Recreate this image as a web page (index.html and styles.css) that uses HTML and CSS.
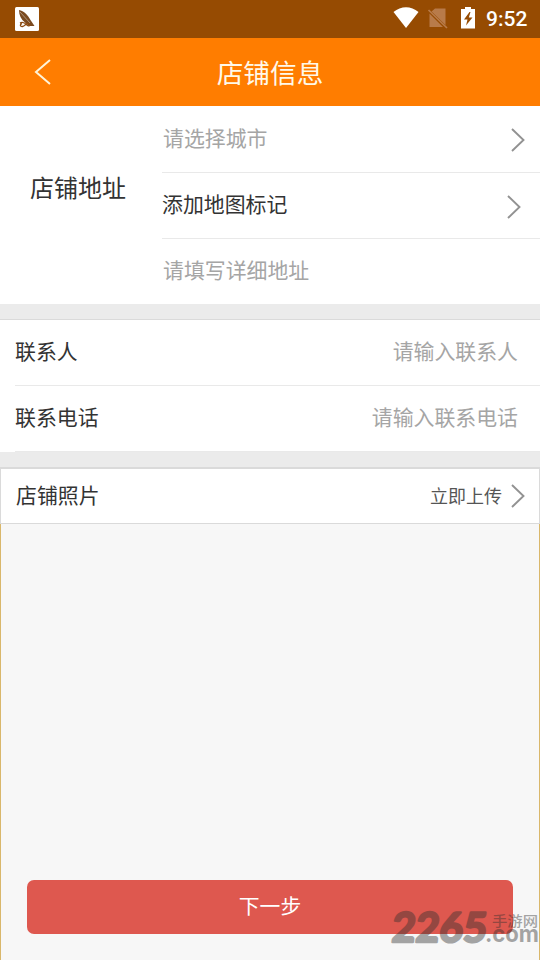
FILE: index.html
```html
<!DOCTYPE html>
<html lang="zh-CN">
<head>
<meta charset="utf-8">
<title>店铺信息</title>
<link rel="stylesheet" href="styles.css">
</head>
<body>
<div class="statusbar">
  <svg class="app-icon" width="24" height="24" viewBox="0 0 24 24"><rect width="24" height="24" rx="1.5" fill="#fff"/><path d="M4 3C9 4 13 8 15.500 13L19.500 19H14L10 15.500C6 12.500 4 8 4 3Z" fill="#7a4a20"/><path d="M5 5L15 16" stroke="#fff" stroke-width=".4"/><path d="M5 16C8 14 10 16 12 18C14 20 16 18 14 16.500C12 15 10 19 7.500 19.500C5 20 4.500 17 7 16.500" fill="none" stroke="#8c4b12" stroke-width="1.300"/></svg>
  <svg class="system-icons" width="84" height="24" viewBox="0 0 84 24"><path d="M.5 5C8-1.500 18-1.500 25.500 5L13 21Z" fill="#fff"/><path d="M42 1.500H52.500V18L38.500 4.500ZM36.500 6.500L50 20H36.500Z" fill="#b87b4a"/><path d="M35.500 3L54 21" stroke="#b87b4a" stroke-width="1.700"/><path d="M72 2V0H78V2H82V21.500H68V2Z" fill="#fff"/><path d="M76.500 5L71 12.500H74.500L73 18.500L79.500 10.500H75.800L77.500 5Z" fill="#964b02"/></svg>
  <span class="clock">9:52</span>
</div>
<header class="header">
  <svg class="back" width="20" height="28" viewBox="0 0 20 28"><path d="M17 2L3 14L17 26" fill="none" stroke="#fff4d8" stroke-width="2"/></svg>
  <h1 class="title">店铺信息</h1>
</header>
<section class="address">
  <div class="address-label">店铺地址</div>
  <div class="address-fields">
    <div class="field hint"><span>请选择城市</span><svg class="chevron" width="14" height="24" viewBox="0 0 14 24"><path d="M1 1L12.500 12L1 23"/></svg></div>
    <div class="field marker"><span>添加地图标记</span><svg class="chevron" width="14" height="24" viewBox="0 0 14 24"><path d="M1 1L12.500 12L1 23"/></svg></div>
    <div class="field hint"><span>请填写详细地址</span></div>
  </div>
</section>
<section class="contact">
  <div class="contact-row"><span>联系人</span><span class="hint">请输入联系人</span></div>
  <div class="contact-row"><span>联系电话</span><span class="hint">请输入联系电话</span></div>
</section>
<section class="photo">
  <span class="photo-label">店铺照片</span>
  <span class="upload">立即上传</span>
  <svg class="chevron" width="14" height="24" viewBox="0 0 14 24"><path d="M1 1L12.500 12L1 23"/></svg>
</section>
<main class="content">
  <button class="next">下一步</button>
</main>
<svg class="watermark" width="154" height="58" viewBox="0 0 154 58">
  <g opacity=".42" fill="#303030">
    <text class="mark-number" transform="translate(5 48) skewX(-5)" textLength="95" lengthAdjust="spacingAndGlyphs">2265</text>
    <text class="mark-cn" x="106" y="32" textLength="46" lengthAdjust="spacingAndGlyphs">手游网</text>
    <text class="mark-com" x="99" y="48" textLength="54" lengthAdjust="spacingAndGlyphs">.com</text>
  </g>
</svg>
</body>
</html>
```
FILE: styles.css
```css
* { box-sizing: border-box; }
body {
  margin: 0;
  width: 540px;
  height: 960px;
  position: relative;
  display: flex;
  flex-direction: column;
  overflow: hidden;
  background: #ebebeb;
  color: #333;
  font: 20.9px/30px "Noto Sans CJK SC", sans-serif;
}
.statusbar {
  height: 38px;
  flex: none;
  display: flex;
  align-items: center;
  padding: 0 12px 0 15px;
  background: #964b02;
}
.system-icons { margin-left: auto; }
.clock {
  margin-left: 9px;
  width: 42px;
  color: #fff;
  font: 500 21px/40px Roboto, sans-serif;
}
.header {
  height: 68px;
  flex: none;
  display: grid;
  grid-template-columns: 80px 1fr 80px;
  align-items: center;
  background: #ff7d00;
}
.back { margin-left: 33px; }
.title {
  margin: 0;
  color: #fff9e9;
  font-size: 26.7px;
  font-weight: 400;
  line-height: 68px;
  text-align: center;
}
.address {
  height: 198px;
  flex: none;
  display: flex;
  background: #fff;
}
.address-label {
  width: 162px;
  padding: 63px 0 0 30px;
  font-size: 24px;
  line-height: 36px;
}
.address-fields { flex: 1; }
.field {
  height: 66px;
  display: flex;
  align-items: center;
  justify-content: space-between;
  padding: 0 15px 6px 1px;
  border-bottom: 1px solid #e9e9e9;
}
.field:first-child {
  height: 67px;
  padding-bottom: 5px;
}
.field:last-child {
  height: 65px;
  border-bottom: 0;
}
.field.marker { padding-right: 19px; padding-left: 0; }
.hint { color: #a5a5a5; }
.chevron {
  flex: none;
  fill: none;
  stroke: #929292;
  stroke-width: 1.9;
}
.field .chevron { margin-top: 6px; }
.marker .chevron { margin-top: 9px; }
.contact {
  margin-top: 15px;
  height: 133px;
  flex: none;
  border-top: 1px solid #dadada;
  background: #fff;
}
.contact-row {
  height: 66px;
  margin-left: 15px;
  padding: 0 22px 5px 0;
  display: flex;
  align-items: center;
  justify-content: space-between;
  border-bottom: 1px solid #e9e9e9;
}
.photo {
  margin-top: 15px;
  height: 57px;
  flex: none;
  display: flex;
  align-items: center;
  padding: 0 14px 0 15px;
  border: 1px solid #dadada;
  border-top-width: 2px;
  background: #fff;
}
.photo-label { margin-bottom: 5px; }
.upload {
  margin: 0 9px 3px auto;
  color: #555;
  font-size: 18px;
}
.content {
  flex: 1;
  display: flex;
  align-items: flex-end;
  padding: 0 26px 26px;
  border: solid #d9b76b;
  border-width: 0 1px;
  background: #f7f7f7;
}
.next {
  width: 100%;
  height: 54px;
  padding: 0 0 5px;
  border: 0;
  border-radius: 7px;
  background: #de584f;
  color: #fff;
  font: 20.8px/30px "Noto Sans CJK SC", sans-serif;
}
.watermark {
  position: absolute;
  left: 386px;
  top: 894px;
  width: 154px;
}
.mark-number {
  font: 700 41px Lato, sans-serif;
  stroke: #303030;
  stroke-width: 2.4;
  stroke-linejoin: round;
}
.mark-cn {
  font: 500 14px "Noto Sans CJK SC", sans-serif;
}
.mark-com {
  font: 700 23px Inter, sans-serif;
}
```
